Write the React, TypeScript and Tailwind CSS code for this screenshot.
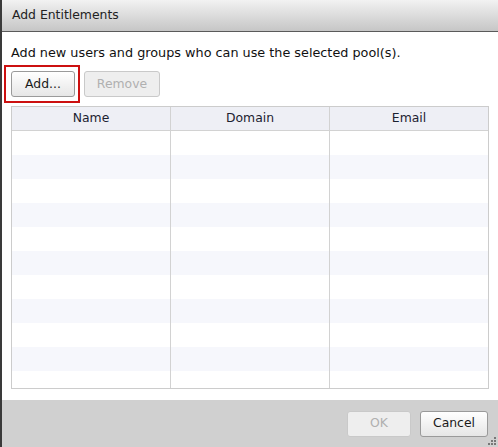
import React from 'react';

const font = { fontFamily: '"DejaVu Sans", Verdana, sans-serif' };

const Btn: React.FC<{ label: string; disabled?: boolean; className?: string }> = ({ label, disabled, className }) => (
  <div
    className={`flex h-[26px] items-center justify-center rounded-[3px] border text-[12.4px] ${
      disabled
        ? 'border-[#c9c9c9] bg-[#eeeeee] text-[#b0b0b0]'
        : 'border-[#9a9a9a] bg-gradient-to-b from-white to-[#e6e6e6] text-[#1a1a1a]'
    } ${className ?? ''}`}
  >
    {label}
  </div>
);

const columns = ['Name', 'Domain', 'Email'];

export default function App() {
  const rows = Array.from({ length: 11 });
  return (
    <div style={font} className="flex h-[447px] w-[498px] flex-col overflow-hidden border-l-2 border-[#3a3a3a] bg-white">
      <div className="flex h-[32px] shrink-0 items-center border-b border-[#5a5a5a] bg-gradient-to-b from-[#f2f2f2] to-[#c6c6c6] pl-[10px] text-[12.4px] text-[#222]">
        Add Entitlements
      </div>
      <div className="flex flex-1 flex-col px-[9px]">
        <div className="mt-[12px] text-[12.8px] leading-[18px] text-[#111]">Add new users and groups who can use the selected pool(s).</div>
        <div className="mt-[3px] flex items-center">
          <div className="-ml-[7px] border-2 border-[#cc1010] py-[4px] pl-[5px] pr-[3px]">
            <Btn label="Add..." className="w-[64px]" />
          </div>
          <Btn label="Remove" disabled className="ml-[4px] w-[76px]" />
        </div>
        <div className="mt-[3px] h-[283px] overflow-hidden border border-[#cccccc]">
          <div className="grid h-[24px] grid-cols-[159px_159px_1fr] border-b border-[#d2d2d2] bg-[#eeeff5]">
            {columns.map((c, i) => (
              <div key={c} className={`flex items-center justify-center text-[12.4px] text-[#1c2230] ${i < 2 ? 'border-r border-[#d2d2d2]' : ''}`}>
                {c}
              </div>
            ))}
          </div>
          {rows.map((_, r) => (
            <div key={r} className={`grid h-[24px] grid-cols-[159px_159px_1fr] ${r % 2 ? 'bg-[#f6f7fc]' : 'bg-white'}`}>
              <div className="border-r border-[#d2d2d2]" />
              <div className="border-r border-[#d2d2d2]" />
              <div />
            </div>
          ))}
        </div>
      </div>
      <div className="relative flex h-[47px] shrink-0 items-center justify-end gap-[9px] bg-[#d0d0d0] pr-[10px]">
        <Btn label="OK" disabled className="w-[64px] border-[#c4c4c4] bg-[#e4e4e4]" />
        <Btn label="Cancel" className="w-[68px]" />
        <svg className="absolute bottom-[1px] right-[1px]" width="9" height="9" viewBox="0 0 9 9">
          <rect x="6" y="0" width="2" height="2" fill="#777" />
          <rect x="3" y="3" width="2" height="2" fill="#777" />
          <rect x="6" y="3" width="2" height="2" fill="#777" />
          <rect x="0" y="6" width="2" height="2" fill="#777" />
          <rect x="3" y="6" width="2" height="2" fill="#777" />
          <rect x="6" y="6" width="2" height="2" fill="#777" />
        </svg>
      </div>
    </div>
  );
}
